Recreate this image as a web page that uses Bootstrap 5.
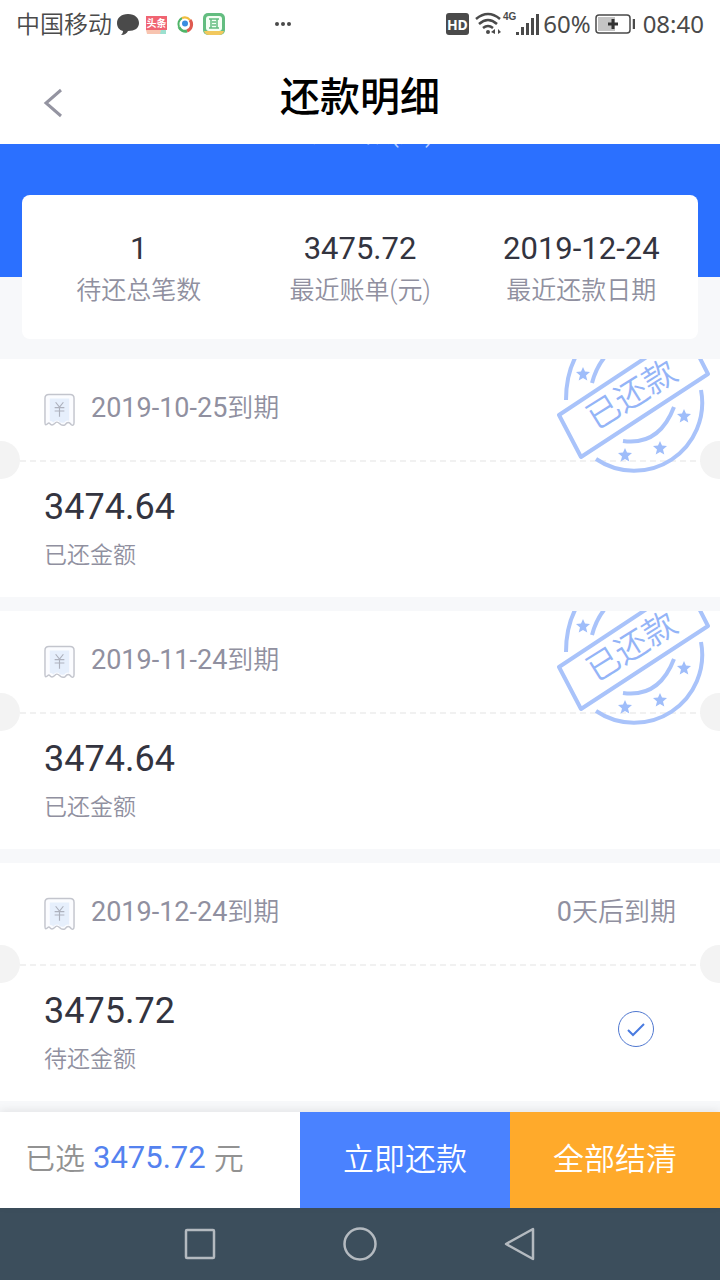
<!DOCTYPE html>
<html lang="zh-CN">
<head>
<meta charset="utf-8">
<meta name="viewport" content="width=device-width, initial-scale=1">
<title>还款明细</title>
<link href="https://cdn.jsdelivr.net/npm/bootstrap@5.3.0/dist/css/bootstrap.min.css" rel="stylesheet">
<style>
  body { font-family: Roboto, "Noto Sans CJK SC", sans-serif; background: #f7f8fa; color: #33343f; }
  svg { display: block; flex: none; }
  .status-bar { height: 48px; padding: 0 16px; color: #4a4a4a; font-size: 24px; }
  .carrier { font-weight: 350; padding-top: 2px; }
  .status-text { font-family: "Noto Sans", "Noto Sans CJK SC", sans-serif; }
  .hd-tag { width: 23px; height: 22px; border-radius: 3px; background: #4a4a4a; color: #fff; font-size: 14px; font-weight: 700; }
  .net-tag { font-family: "Liberation Sans", sans-serif; font-size: 10px; font-weight: 700; line-height: 14px; }
  .title-bar { height: 96px; padding-top: 4px; }
  .title-bar h1 { font-size: 40px; font-weight: 500; line-height: 48px; color: #000; }
  .back-btn { left: 32px; top: 32px; }
  .hero { height: 133px; background: #2b70ff; }
  .hero-label { margin-top: -29px; line-height: 36px; font-size: 26px; color: #bcd0ff; }
  .summary { margin: -82px 22px 20px; padding: 4px 6px 0; height: 144px; border-radius: 8px; z-index: 1; }
  .summary dd { font-size: 31px; line-height: 40px; }
  .summary dt { font-size: 25px; line-height: 36px; margin-top: 4px; }
  .muted { color: #9090a0; font-weight: 350; }
  .muted .num { font-weight: 400; }
  .bill { margin-bottom: 14px; }
  .bill:last-child { margin-bottom: 11px; }
  .bill-head { height: 101px; padding: 0 44px; }
  .bill-date { font-size: 26px; line-height: 36px; padding-bottom: 4px; }
  .bill-date .num { font-size: 27px; }
  .bill-body { padding: 24px 44px; }
  .bill-amount { font-size: 36px; line-height: 44px; }
  .bill-note { font-size: 23px; line-height: 32px; margin-top: 11px; padding-bottom: 1px; }
  .perforation { height: 1px; }
  .perforation::before, .perforation::after { content: ""; position: absolute; top: -19px; width: 38px; height: 38px; border-radius: 50%; background: #f3f3f3; }
  .perforation::before { left: -18px; }
  .perforation::after { right: -18px; }
  .perforation span { display: block; height: 2px; background: repeating-linear-gradient(90deg, #f1f1f1 0 6px, transparent 6px 10px); }
  .stamp { top: 0; right: 10px; }
  .pick.form-check-input { width: 36px; height: 36px; margin: 22px 22px 0 0; border: 1px solid #5078d0; border-radius: 50%; background-color: #fff; }
  .pick.form-check-input:checked { border-color: #5078d0; background-color: #fff; background-size: 32px 32px;
    background-image: url("data:image/svg+xml,%3Csvg xmlns='http://www.w3.org/2000/svg' viewBox='0 0 32 32'%3E%3Cpath d='M8 17l5 5 11-11' fill='none' stroke='%234a7be0' stroke-width='2'/%3E%3C/svg%3E"); }
  .pay-bar { height: 96px; font-size: 30px; box-shadow: 0 -2px 8px rgba(0,0,0,.08); z-index: 2; }
  .pay-total { flex: 0 0 41.6667%; padding: 0 0 3px 25px; }
  .pay-total .muted { color: #929292; }
  .pay-total strong { font-size: 31px; font-weight: 400; color: #5482ef; margin: 0 8px; }
  .pay-bar .btn { flex: 1 1 0; border: 0; border-radius: 0; color: #fff; font-size: 31px; font-weight: 350; }
  .btn-pay { background: #4a82ff; }
  .btn-settle { background: #ffaa2b; }
  .system-nav { height: 72px; background: #3c4e5c; }
  .system-nav button { width: 160px; }
</style>
</head>
<body>
<svg width="0" height="0" class="position-absolute" aria-hidden="true">
  <defs>
    <path id="star" d="M0-7 2-2.500 7-2 3 1.500 4.300 6.500 0 4-4.300 6.500-3 1.500-7-2-2-2.500z"/>
    <symbol id="receipt" viewBox="0 0 32 34">
      <path d="M1 5q0-4 4-4h22q4 0 4 4v25q0 4-3 2-3-4-6 0-3 2-6-1-3-3-5 0-3 3-5 0-1-1-2 0-3 3-3-1z" fill="#fbfcff" stroke="#c3c5cd" stroke-width="1.500"/>
      <path d="M6 5h20v23q-3-1-5 2-4 1-6-2-4-1-5 2-2-2-4-2z" fill="#e6effc"/>
      <path d="M12 9l4 5 4-5M11 14.500h10M11 18h10M16 14v10" fill="none" stroke="#adb1bd" stroke-width="1.200"/>
    </symbol>
    <symbol id="repaid" viewBox="0 0 160 120">
      <g fill="none" stroke="#a9c3fa" stroke-width="4" stroke-linejoin="round">
        <path d="M9 56 136-28 158 15 31 98z"/>
        <path d="M25-1Q16 17 16 41M54-1Q46 9 42 24M46 100A68 68 0 0 0 151 31M73 82Q109 87 124 48"/>
      </g>
      <g fill="#9fbdfa">
        <use href="#star" x="33" y="15"/><use href="#star" x="134" y="57"/>
        <use href="#star" x="110" y="89"/><use href="#star" x="75" y="96"/>
      </g>
      <text x="82" y="47" transform="rotate(-32 82 36)" text-anchor="middle" font-size="33" font-weight="350" fill="#94b4f7">已还款</text>
    </symbol>
  </defs>
</svg>

<div class="d-flex flex-column min-vh-100 position-relative">
  <div class="status-bar bg-white d-flex align-items-center justify-content-between">
    <div class="d-flex align-items-center">
      <span class="carrier">中国移动</span>
      <svg class="ms-1" width="24" height="24" viewBox="0 0 24 24"><path d="M12 2C5 2 1 6 1 11c0 4 2 7 6 8 0 2-1 3-2 4 4 0 6-2 7-4 7 0 11-3 11-8S19 2 12 2z" fill="#4a4a4a"/></svg>
      <svg class="ms-1" width="24" height="24" viewBox="0 0 24 24"><path d="M2 4h21v14H2z" fill="#f06472"/><path d="M2 18h20v4H3z" fill="#f8c4b0"/><path d="M17 18h5v4h-6z" fill="#9be0cf"/><text x="12.500" y="15" text-anchor="middle" font-size="10" font-weight="700" fill="#fff">头条</text></svg>
      <svg class="ms-2" width="18" height="18" viewBox="0 0 18 18"><g fill="none" stroke-width="2"><path d="M3 12A7 7 0 0 1 6 3" stroke="#4fb568"/><path d="M6 3a7 7 0 0 1 8 2" stroke="#f1bd3e"/><path d="M14 5a7 7 0 0 1-3 11" stroke="#df5a50" stroke-width="3"/><path d="M11 16a7 7 0 0 1-8-4" stroke="#4fb568" stroke-width="3"/></g><circle cx="9" cy="8.500" r="3" fill="#3b8de0"/></svg>
      <svg class="ms-2" width="24" height="24" viewBox="0 0 24 24"><rect x="1" y="1" width="22" height="22" rx="5" fill="#63bd80"/><path d="M2 19h20q-1 4-5 4H7q-4 0-5-4z" fill="#f2c85d"/><rect x="4" y="4" width="16" height="15" rx="3" fill="#f5fff5"/><path d="M7 7h10M9 7v9M15 7v9M7 16h10M10 10h4M10 13h4" fill="none" stroke="#63bd80" stroke-width="1.500"/></svg>
      <svg class="ms-5" width="18" height="6" viewBox="0 0 18 6"><g fill="#4a4a4a"><circle cx="3" cy="3" r="2"/><circle cx="9" cy="3" r="2"/><circle cx="15" cy="3" r="2"/></g></svg>
    </div>
    <div class="status-text d-flex align-items-center">
      <span class="hd-tag d-flex align-items-center justify-content-center">HD</span>
      <svg class="ms-1" width="30" height="24" viewBox="0 0 30 24"><g fill="none" stroke="#4a4a4a" stroke-width="2.500"><path d="M3 7Q15-3 27 7M6 12q9-8 18 0M10 16q5-4 10 0"/></g><circle cx="15" cy="20" r="2" fill="#4a4a4a"/><path d="M22 17v5l-4-2zM25 17v5l3-2z" fill="#4a4a4a"/></svg>
      <span class="net-tag align-self-start pt-1">4G</span>
      <svg width="23" height="24" viewBox="0 0 23 24"><path d="M0 20h3v3H0zM5 15h3v8H5zM10 11h3v12h-3zM15 6h3v17h-3zM20 2h3v21h-3z" fill="#4a4a4a"/></svg>
      <span class="ms-1">60%</span>
      <svg class="ms-1 me-2" width="40" height="20" viewBox="0 0 40 20"><rect x="1" y="1" width="34" height="18" rx="3" fill="#fff" stroke="#4a4a4a" stroke-width="1.500"/><path d="M3 3h17v14H3z" fill="#c4c4c4"/><path d="M18 5v10M13 10h10" stroke="#333" stroke-width="3"/><path d="M39 5v10" stroke="#4a4a4a" stroke-width="2.500"/></svg>
      <span>08:40</span>
    </div>
  </div>

  <header class="title-bar bg-white position-relative d-flex align-items-center justify-content-center">
    <button type="button" class="back-btn btn p-2 border-0 position-absolute" aria-label="返回">
      <svg width="24" height="30" viewBox="0 0 24 30"><path d="M21 2 6 15l15 13" fill="none" stroke="#9494a1" stroke-width="3"/></svg>
    </button>
    <h1 class="mb-0">还款明细</h1>
  </header>

  <main class="flex-grow-1">
    <div class="hero overflow-hidden text-center"><div class="hero-label">待还总额(元)</div></div>
    <dl class="summary bg-white position-relative d-flex align-items-center text-center">
      <div class="col-4 d-flex flex-column-reverse"><dt class="muted">待还总笔数</dt><dd class="mb-0">1</dd></div>
      <div class="col-4 d-flex flex-column-reverse"><dt class="muted">最近账单(元)</dt><dd class="mb-0">3475.72</dd></div>
      <div class="col-4 d-flex flex-column-reverse"><dt class="muted">最近还款日期</dt><dd class="mb-0">2019-12-24</dd></div>
    </dl>

    <section class="overflow-hidden">
      <article class="bill bg-white position-relative">
        <div class="bill-head d-flex align-items-center">
          <svg width="31" height="34"><use href="#receipt"/></svg>
          <span class="bill-date muted ms-3"><time class="num">2019-10-25</time>到期</span>
        </div>
        <div class="perforation position-relative"><span></span></div>
        <div class="bill-body">
          <div class="bill-amount">3474.64</div>
          <div class="bill-note muted">已还金额</div>
        </div>
        <svg class="stamp position-absolute" width="160" height="120"><use href="#repaid"/></svg>
      </article>

      <article class="bill bg-white position-relative">
        <div class="bill-head d-flex align-items-center">
          <svg width="31" height="34"><use href="#receipt"/></svg>
          <span class="bill-date muted ms-3"><time class="num">2019-11-24</time>到期</span>
        </div>
        <div class="perforation position-relative"><span></span></div>
        <div class="bill-body">
          <div class="bill-amount">3474.64</div>
          <div class="bill-note muted">已还金额</div>
        </div>
        <svg class="stamp position-absolute" width="160" height="120"><use href="#repaid"/></svg>
      </article>

      <article class="bill bg-white position-relative">
        <div class="bill-head d-flex align-items-center">
          <svg width="31" height="34"><use href="#receipt"/></svg>
          <span class="bill-date muted ms-3"><time class="num">2019-12-24</time>到期</span>
          <span class="bill-date muted ms-auto"><span class="num">0</span>天后到期</span>
        </div>
        <div class="perforation position-relative"><span></span></div>
        <div class="bill-body d-flex align-items-start justify-content-between">
          <label for="bill-3">
            <span class="bill-amount d-block">3475.72</span>
            <span class="bill-note muted d-block">待还金额</span>
          </label>
          <input class="pick form-check-input" type="checkbox" id="bill-3" checked>
        </div>
      </article>
    </section>
  </main>

  <footer class="pay-bar bg-white d-flex position-relative">
    <div class="pay-total d-flex align-items-center"><span class="muted">已选</span><strong>3475.72</strong><span class="muted">元</span></div>
    <button type="button" class="btn btn-pay">立即还款</button>
    <button type="button" class="btn btn-settle">全部结清</button>
  </footer>
  <nav class="system-nav d-flex justify-content-center">
    <button type="button" class="btn border-0 p-0 d-flex align-items-center justify-content-center" aria-label="最近任务"><svg width="34" height="34" viewBox="0 0 34 34"><rect x="3" y="3" width="28" height="28" rx="1" fill="none" stroke="#b4bac0" stroke-width="2.500"/></svg></button>
    <button type="button" class="btn border-0 p-0 d-flex align-items-center justify-content-center" aria-label="主屏幕"><svg width="34" height="34" viewBox="0 0 34 34"><circle cx="17" cy="17" r="15.500" fill="none" stroke="#b4bac0" stroke-width="2.500"/></svg></button>
    <button type="button" class="btn border-0 p-0 d-flex align-items-center justify-content-center" aria-label="后退"><svg width="34" height="34" viewBox="0 0 34 34"><path d="M30 2v30L3 17z" fill="none" stroke="#b4bac0" stroke-width="2.500" stroke-linejoin="round"/></svg></button>
  </nav>
</div>
<script src="https://cdn.jsdelivr.net/npm/bootstrap@5.3.0/dist/js/bootstrap.bundle.min.js"></script>
</body>
</html>
